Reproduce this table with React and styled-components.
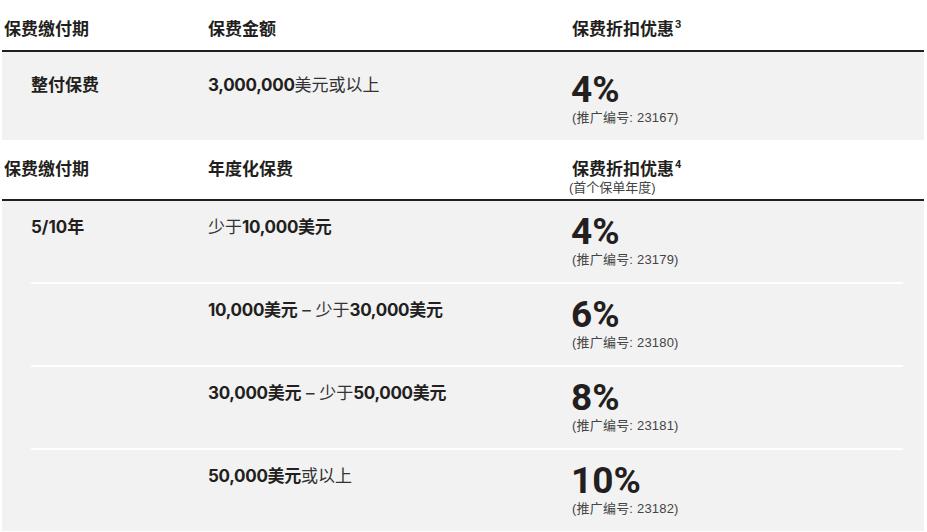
import styled, { createGlobalStyle } from 'styled-components'

const GlobalStyle = createGlobalStyle`
    body{
        margin:0;
        background:#fff;
        font-family:"Liberation Sans", "Noto Sans CJK SC", sans-serif;
        color:#231f20;
    }
`

// DATA FOR THE TWO SECTIONS
const singlePay = [
    { term:'整付保费', amount:[['3,000,000', true], ['美元或以上', false]], rate:'4%', code:'23167' },
]

const multiPay = [
    { term:'5/10年', amount:[['少于', false], ['10,000美元', true]], rate:'4%', code:'23179' },
    { term:'', amount:[['10,000美元', true], [' – 少于', false], ['30,000美元', true]], rate:'6%', code:'23180' },
    { term:'', amount:[['30,000美元', true], [' – 少于', false], ['50,000美元', true]], rate:'8%', code:'23181' },
    { term:'', amount:[['50,000美元', true], ['或以上', false]], rate:'10%', code:'23182' },
]

const Amount = ({ parts }) => (
    <AmountText>
        {parts.map(([text, bold], i) => bold ? <b key={i}>{text}</b> : <span key={i}>{text}</span>)}
    </AmountText>
)

const Discount = ({ rate, code }) => (
    <div>
        <Rate>{rate}</Rate>
        <Code>(推广编号: {code})</Code>
    </div>
)

const App = () => {
    return (
        <Wrap>
            <GlobalStyle />

            <HeaderRow>
                <HeadCell>保费缴付期</HeadCell>
                <HeadCell>保费金额</HeadCell>
                <HeadCell>保费折扣优惠<Sup>3</Sup></HeadCell>
            </HeaderRow>
            <Panel>
                {singlePay.map((row, i) => (
                    <Row key={i} $top={21} $bottom={13}>
                        <Term>{row.term}</Term>
                        <Amount parts={row.amount} />
                        <Discount rate={row.rate} code={row.code} />
                    </Row>
                ))}
            </Panel>

            <HeaderRow>
                <HeadCell>保费缴付期</HeadCell>
                <HeadCell>年度化保费</HeadCell>
                <HeadCell>
                    保费折扣优惠<Sup>4</Sup>
                    <HeadNote>(首个保单年度)</HeadNote>
                </HeadCell>
            </HeaderRow>
            <Panel>
                {multiPay.map((row, i) => (
                    <Row key={i} $top={14} $bottom={13} $divider={i > 0}>
                        <Term>{row.term}</Term>
                        <Amount parts={row.amount} />
                        <Discount rate={row.rate} code={row.code} />
                    </Row>
                ))}
            </Panel>
        </Wrap>
    )
}

export default App

const Wrap = styled.div`
    width:922px;
    margin-left:2px;
`

const HeaderRow = styled.div`
    display:grid;
    grid-template-columns:204px 364px 1fr;
    padding:18px 0 8px 2px;
    border-bottom:2px solid #231f20;
`

const HeadCell = styled.div`
    font-size:17px;
    line-height:24px;
    font-weight:700;
    color:#231f20;
`

const Sup = styled.sup`
    font-family:Roboto, sans-serif;
    font-size:11px;
    font-weight:700;
    line-height:0;
    vertical-align:7px;
    margin-left:1px;
`

const HeadNote = styled.div`
    font-size:13px;
    line-height:12px;
    font-weight:400;
    color:#444;
    margin:0 0 -3px -3px;
`

const Panel = styled.div`
    background:#f2f2f2;
    padding:0 21px 0 29px;
`

const Row = styled.div`
    display:grid;
    grid-template-columns:177px 364px 1fr;
    align-items:start;
    padding:${p => p.$top}px 0 ${p => p.$bottom}px;
    border-top:${p => p.$divider ? '2px solid #fff' : 'none'};
`

const Term = styled.div`
    font-family:Inter, "Noto Sans CJK SC", sans-serif;
    font-size:17px;
    line-height:26px;
    font-weight:700;
    margin-top:-1px;
`

const AmountText = styled.div`
    font-family:Inter, "Noto Sans CJK SC", sans-serif;
    font-size:17px;
    line-height:26px;
    margin-top:-1px;

    b{
        font-weight:700;
        color:#231f20;
        letter-spacing:-0.3px;
    }

    span{
        font-weight:400;
        color:#333;
    }
`

const Rate = styled.div`
    font-family:Roboto, sans-serif;
    font-size:37px;
    line-height:34px;
    font-weight:700;
    margin-left:-1px;
`

const Code = styled.div`
    font-size:13px;
    line-height:18px;
    margin-top:2px;
    color:#444;
    letter-spacing:0.2px;
`
